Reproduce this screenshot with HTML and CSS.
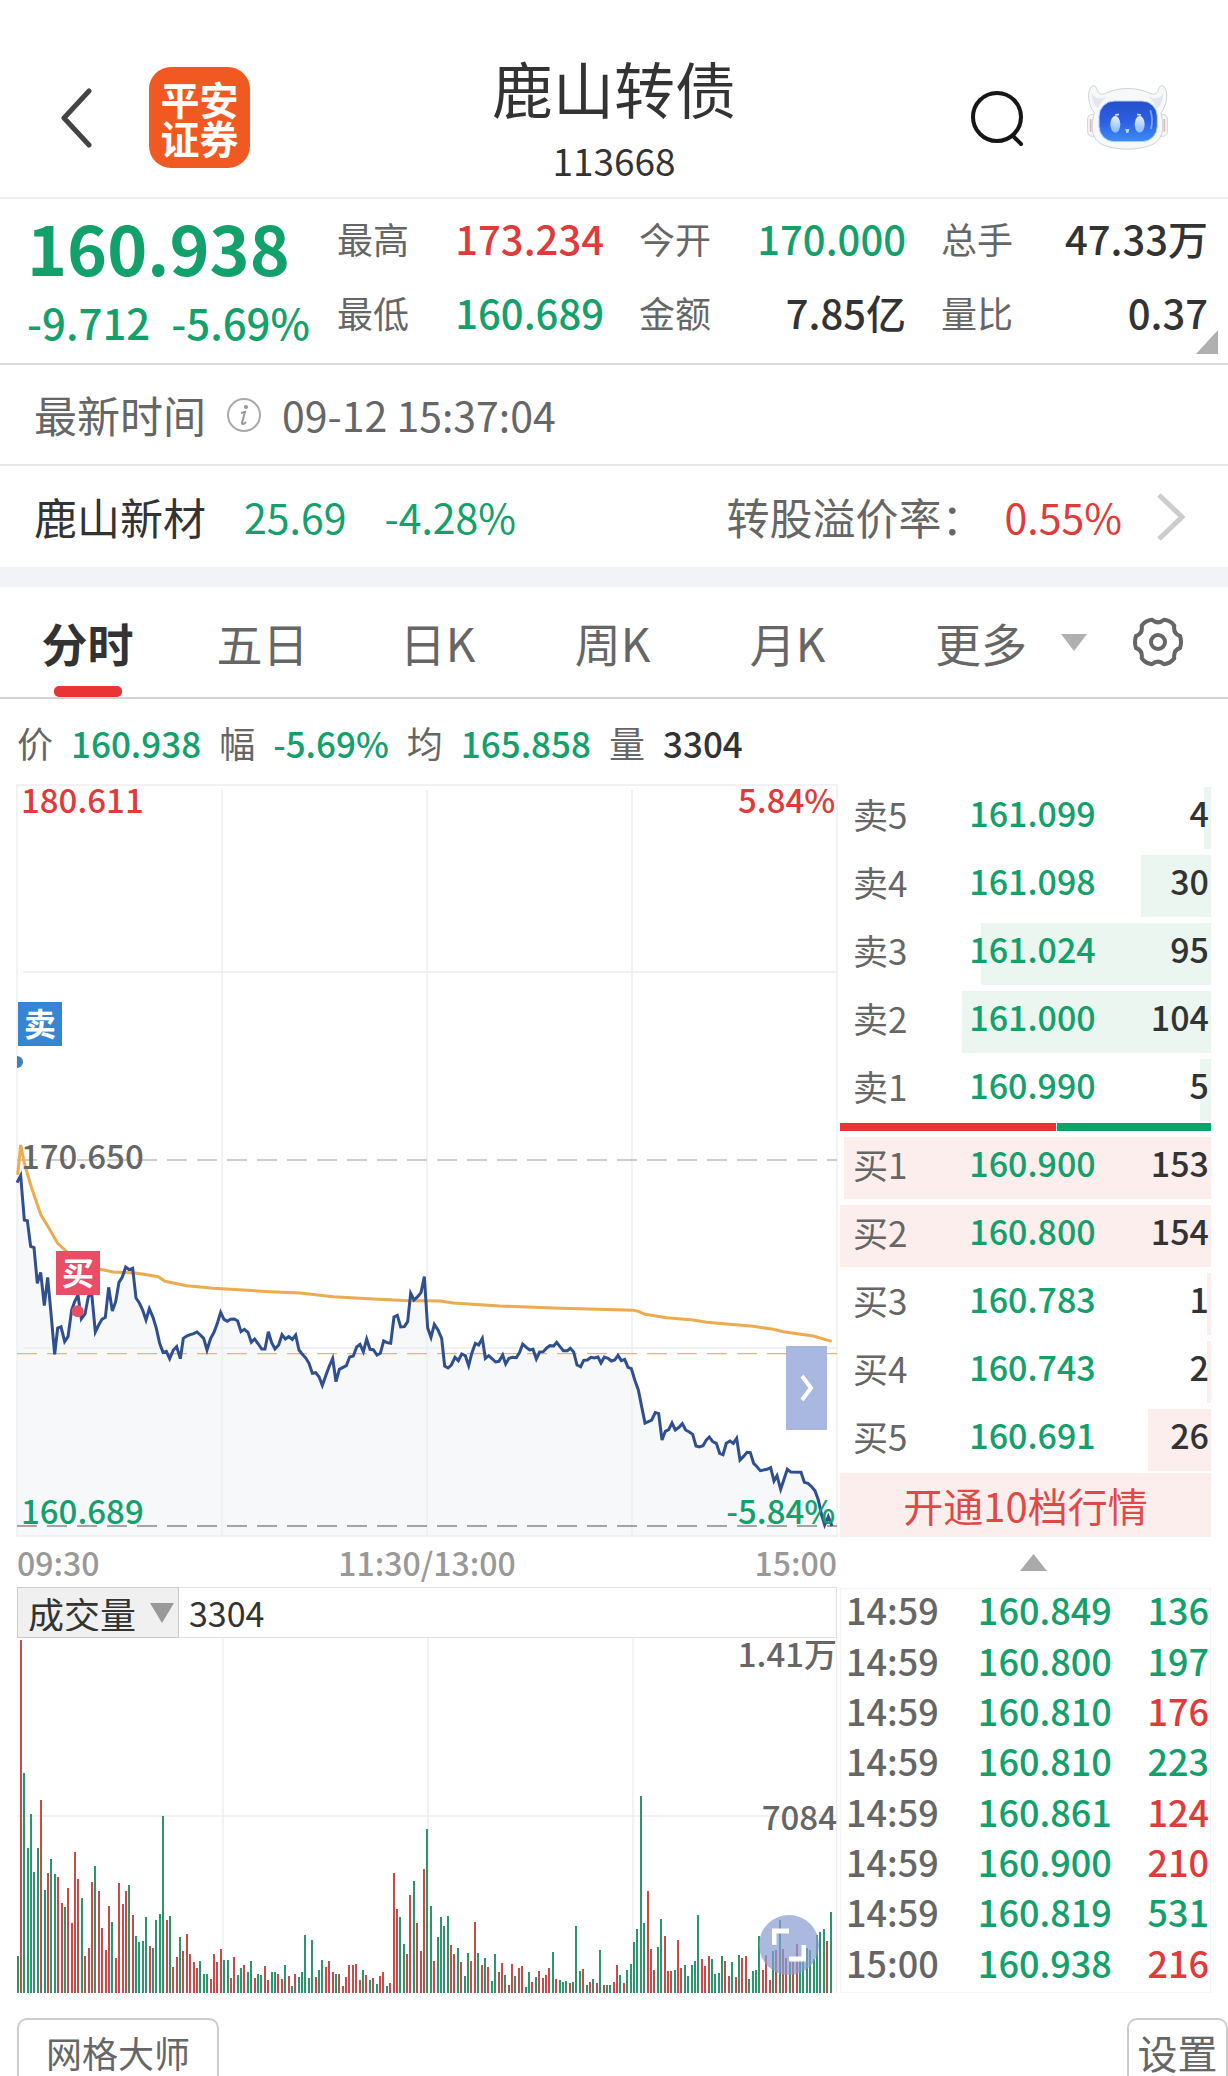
FILE: index.html
```html
<!DOCTYPE html>
<html lang="zh-CN">
<head>
<meta charset="utf-8">
<meta name="viewport" content="width=device-width">
<title>鹿山转债 113668</title>
<link rel="stylesheet" href="styles.css">
</head>
<body>
<header class="topbar">
  <div class="topbar-side">
    <button class="icon-btn" aria-label="返回">
      <svg width="32" height="60" viewBox="0 0 32 60"><path d="M29 3 4 30l25 27" fill="none" stroke="#444" stroke-width="5" stroke-linecap="round" stroke-linejoin="round"/></svg>
    </button>
    <div class="logo"><span>平安</span><span>证券</span></div>
  </div>
  <div class="title">
    <h1>鹿山转债</h1>
    <p>113668</p>
  </div>
  <div class="topbar-side topbar-right">
    <button class="icon-btn" aria-label="搜索">
      <svg width="54" height="58" viewBox="0 0 54 58"><g fill="none" stroke="#161616" stroke-width="4" stroke-linecap="round"><circle cx="27" cy="28" r="24"/><path d="M43 47l8 8"/></g></svg>
    </button>
    <button class="icon-btn" aria-label="智能助手">
      <svg width="81" height="66" viewBox="0 0 243 198">
        <defs>
          <linearGradient id="screen" x1="0" y1="0" x2="0" y2="1"><stop offset="0" stop-color="#2450c8"/><stop offset=".5" stop-color="#2c5fe4"/><stop offset="1" stop-color="#3d8cf4"/></linearGradient>
          <linearGradient id="eye" x1="0" y1="0" x2="0" y2="1"><stop offset="0" stop-color="#e4f2ff"/><stop offset="1" stop-color="#86b8ff"/></linearGradient>
        </defs>
        <g fill="#f7f8fa" stroke="#cfd1d6" stroke-width="3">
          <rect x="2" y="88" width="34" height="66" rx="14"/>
          <rect x="207" y="88" width="34" height="66" rx="14"/>
          <path d="M22 84C4 58-2 22 14 4c8-6 14 2 16 10 4 14 14 16 28 10 36-18 92-18 128 0 14 6 24 4 28-10 2-8 8-16 16-10 16 18 10 54-8 80 12 50 4 84-34 98-40 14-94 14-134 0-38-14-46-48-32-98z"/>
        </g>
        <path d="M11 102v38M232 102v38" stroke="#d9b9b6" stroke-width="5"/>
        <path d="M14 24c0 22 10 40 20 46 6-16 14-26 24-34-24 8-36 4-44-12zM229 24c0 22-10 40-20 46-6-16-14-26-24-34 24 8 36 4 44-12z" fill="#e3e6ec"/>
        <rect x="36" y="48" width="175" height="122" rx="46" fill="url(#screen)" stroke="#bcd2f8" stroke-width="3"/>
        <path d="M190 76c6 18 6 40 2 56" fill="none" stroke="#86a8f6" stroke-width="5"/>
        <ellipse cx="85" cy="118" rx="15" ry="25" fill="url(#eye)"/>
        <ellipse cx="158" cy="118" rx="15" ry="25" fill="url(#eye)"/>
        <path d="M84 90l12-2M150 88l12 2" stroke="#cfe2ff" stroke-width="5"/>
        <path d="M115 132h12l-3 12h-6z" fill="#b4d4ff"/>
      </svg>
    </button>
  </div>
</header>

<section class="quote">
  <div class="quote-main">
    <strong class="down">160.938</strong>
    <div class="quote-change down"><span>-9.712</span><span>-5.69%</span></div>
  </div>
  <dl class="quote-grid">
    <div><dt>最高</dt><dd class="up">173.234</dd></div>
    <div><dt>今开</dt><dd class="down">170.000</dd></div>
    <div><dt>总手</dt><dd>47.33万</dd></div>
    <div><dt>最低</dt><dd class="down">160.689</dd></div>
    <div><dt>金额</dt><dd>7.85亿</dd></div>
    <div><dt>量比</dt><dd>0.37</dd></div>
  </dl>
  <i class="corner"></i>
</section>

<section class="time-row">
  <span class="row-name">最新时间</span>
  <svg width="36" height="36" viewBox="0 0 36 36"><circle cx="18" cy="18" r="16" fill="none" stroke="#aaa" stroke-width="2"/><circle cx="20" cy="10" r="2" fill="#999"/><path d="M15 16l4-1-3 11c0 2 2 1 4-1" fill="none" stroke="#999" stroke-width="2"/></svg>
  <time>09-12 15:37:04</time>
</section>

<a class="stock-row" href="#stock">
  <span class="row-name stock-name">鹿山新材</span>
  <span class="down">25.69</span>
  <span class="down stock-pct">-4.28%</span>
  <span class="row-name premium">转股溢价率：</span>
  <span class="up">0.55%</span>
  <svg width="30" height="50" viewBox="0 0 30 50"><path d="M3 3l23 22L3 47" fill="none" stroke="#ccc" stroke-width="5"/></svg>
</a>

<nav class="tabs">
  <button class="tab active">分时</button>
  <button class="tab">五日</button>
  <button class="tab">日K</button>
  <button class="tab">周K</button>
  <button class="tab">月K</button>
  <div class="tabs-more">
    <button class="tab">更多<svg width="26" height="17" viewBox="0 0 26 17"><path d="M0 0h26L13 17z" fill="#b0b0b0"/></svg></button>
    <button class="icon-btn" aria-label="图表设置">
      <svg width="50" height="50" viewBox="-25 -25 50 50"><g fill="none" stroke="#666" stroke-width="4" stroke-linejoin="round"><path d="M22 6Q15 8.500 16.300 16.300Q12.500 21.500 6 22.200Q0 17-6 22.200Q-12.500 21.500-16.300 16.300Q-15 8.500-22 6Q-24 0-22-6Q-15-8.500-16.300-16.300Q-12.500-21.500-6-22.200Q0-17 6-22.200Q12.500-21.500 16.300-16.300Q15-8.500 22-6Q24 0 22 6z"/><circle r="7"/></g></svg>
    </button>
  </div>
</nav>

<dl class="stats">
  <dt>价</dt><dd class="down">160.938</dd>
  <dt>幅</dt><dd class="down">-5.69%</dd>
  <dt>均</dt><dd class="down">165.858</dd>
  <dt>量</dt><dd>3304</dd>
</dl>

<main class="market">
  <div class="charts">
    <div class="plot">
      <svg class="plot-svg" viewBox="51 -1005 2460 2253">
        <path class="area" d="M51 1248V188L62 167 73 300 82 302 92 379 102 383 112 490 122 457 133 557 143 472 153 580 164 703 173 624 183 620 194 665 204 650 215 570 234 525 244 597 255 582 275 520 286 636 306 598 316 592 326 502 337 573 357 487 377 441 398 445 408 534 438 600 448 566 469 625 489 697 509 716 530 680 541 716 550 655 591 636 611 655 621 690 642 637 662 577 682 604 713 603 723 635 744 637 754 667 785 687 795 687 805 635 825 687 846 644 887 645 897 690 927 730 937 760 967 796 998 715 1008 785 1018 748 1039 737 1060 708 1080 673 1090 695 1100 657 1110 688 1131 705 1151 663 1172 670 1182 591 1202 621 1223 605 1232 520 1263 518 1273 470 1283 624 1293 652 1303 613 1325 655 1334 738 1344 744 1365 712 1385 702 1406 737 1426 670 1447 655 1456 715 1487 726 1508 705 1517 732 1549 713 1568 672 1599 688 1609 717 1650 677 1670 667 1690 692 1711 685 1731 735 1742 740 1751 721 1854 706 1894 746 1915 810 1935 909 1955 900 1976 881 1986 960 2016 909 2047 911 2078 943 2098 981 2128 951 2169 1004 2190 963 2210 955 2220 1020 2251 998 2281 1052 2312 1043 2342 1108 2362 1048 2403 1057 2445 1112 2474 1215 2496 1218V1248z"/>
        <g class="grid">
          <path d="M51-1005H2511V1248H51z"/>
          <path d="M666-990V1248M1281-990V1248M1896-990V1248M69-444H2511M69 684H2511"/>
        </g>
        <path class="dash" stroke="#bdbdbd" d="M51 120H2511"/>
        <path class="dash" stroke="#888" d="M51 1218H2511"/>
        <path class="dash dash-last" d="M51 701H2511"/>
        <polyline class="avg" points="53,165 62,75 72,125 92,195 102,225 123,285 143,318 173,370 195,390 235,430 300,448 340,456 405,459 440,464 475,470 495,484 560,497 640,505 810,515 900,519 1000,530 1120,537 1230,542 1275,542 1320,543 1360,549 1500,558 1660,564 1900,571 1915,574 1935,583 2000,593 2080,600 2120,607 2260,619 2320,628 2350,635 2440,648 2495,664"/>
        <polyline class="price" points="51,188 62,167 73,300 82,302 92,379 102,383 112,490 122,457 133,557 143,472 153,580 164,703 173,624 183,620 194,665 204,650 215,570 224,545 234,525 244,597 255,582 265,530 275,520 286,636 296,615 306,598 316,592 326,502 337,573 347,545 357,487 367,471 377,441 387,449 398,445 408,534 418,549 428,570 438,600 448,566 459,592 469,625 479,670 489,697 499,694 509,716 520,690 530,680 541,716 550,655 560,648 571,644 581,641 591,636 601,645 611,655 621,690 632,655 642,637 652,610 662,577 672,598 682,604 692,598 703,597 713,603 723,635 733,628 744,637 754,667 764,657 775,672 785,687 795,687 805,635 815,668 825,687 836,675 846,644 856,657 866,650 877,658 887,645 897,690 907,703 918,715 927,730 937,760 947,758 957,770 967,796 978,765 988,738 998,715 1008,785 1018,748 1029,742 1039,737 1049,711 1060,708 1070,681 1080,673 1090,695 1100,657 1110,688 1120,689 1131,705 1141,700 1151,663 1161,668 1172,670 1182,591 1192,586 1202,621 1213,620 1223,605 1232,520 1242,540 1253,530 1263,518 1273,470 1283,624 1293,652 1303,613 1314,630 1325,655 1334,738 1344,744 1354,735 1365,712 1375,722 1385,702 1396,707 1406,737 1416,698 1426,670 1436,675 1447,655 1456,715 1466,707 1476,716 1487,726 1497,724 1508,705 1517,732 1527,715 1538,712 1549,713 1559,697 1568,672 1579,682 1589,690 1599,688 1609,717 1619,696 1630,695 1640,684 1650,677 1661,678 1670,667 1680,680 1690,692 1702,692 1711,685 1721,696 1731,735 1742,740 1751,721 1762,720 1773,712 1783,714 1794,711 1803,729 1813,711 1824,715 1834,723 1844,720 1854,706 1864,722 1874,718 1884,742 1894,746 1905,782 1915,810 1925,860 1935,909 1955,900 1966,878 1976,881 1986,960 1996,934 2006,929 2016,909 2026,930 2037,922 2047,911 2057,930 2068,936 2078,943 2088,978 2098,981 2109,977 2119,960 2128,951 2138,965 2149,970 2159,1000 2169,1004 2179,970 2190,963 2200,970 2210,955 2220,1020 2230,1010 2241,997 2251,998 2261,1030 2271,1040 2281,1052 2301,1048 2312,1043 2322,1083 2331,1067 2342,1108 2353,1075 2362,1048 2372,1056 2403,1057 2413,1087 2424,1090 2435,1100 2445,1112 2455,1140 2465,1185 2474,1215 2485,1190 2496,1218"/>
        <path d="M51-192a18 18 0 0 1 0 36z" fill="#3f7fc0"/>
        <rect x="54" y="-354" width="132" height="132" fill="#3585d4"/>
        <text class="mark" x="120" y="-252">卖</text>
        <circle cx="233" cy="574" r="18" fill="#e94e66"/>
        <rect x="168" y="393" width="132" height="132" fill="#e94e66"/>
        <text class="mark" x="234" y="494">买</text>
        <text class="label t-up" x="63" y="-921">180.611</text>
        <text class="label t-up end" x="2506" y="-921">5.84%</text>
        <text class="label" x="63" y="147">170.650</text>
        <text class="label t-down" x="63" y="1212">160.689</text>
        <text class="label t-down end" x="2506" y="1212">-5.84%</text>
      </svg>
      <button class="expand" aria-label="收起盘口"><svg width="14" height="28" viewBox="0 0 14 28"><path d="M2 2l9 12-9 12" fill="none" stroke="#fff" stroke-width="4"/></svg></button>
    </div>
    <div class="axis"><span>09:30</span><span>11:30/13:00</span><span>15:00</span></div>
    <div class="vol-head">
      <label class="vol-select">
        <select aria-label="指标"><option>成交量</option></select>
        <svg width="24" height="20" viewBox="0 0 24 20"><path d="M0 0h24L12 20z" fill="#999"/></svg>
      </label>
      <span>3304</span>
    </div>
    <div class="plot">
      <svg class="plot-svg" viewBox="51 204 2460 1065">
        <g class="grid"><path d="M669 204V1269M1284 204V1269M1899 204V1269M51 738H2511M2510 204V1269"/></g>
        <g id="bars"></g>
        <text class="label end" x="2511" y="291">1.41万</text>
        <text class="label end" x="2511" y="780">7084</text>
      </svg>
      <button class="fullscreen" aria-label="全屏"><svg width="34" height="34" viewBox="0 0 34 34"><path d="M2 17V3h15M32 17v14H17" fill="none" stroke="#fff" stroke-width="5"/></svg></button>
    </div>
  </div>

  <div class="side">
    <table class="book sell"><tbody>
      <tr style="--w:2%"><th>卖5</th><td class="down">161.099</td><td>4</td></tr>
      <tr style="--w:19%"><th>卖4</th><td class="down">161.098</td><td>30</td></tr>
      <tr style="--w:62%"><th>卖3</th><td class="down">161.024</td><td>95</td></tr>
      <tr style="--w:67%"><th>卖2</th><td class="down">161.000</td><td>104</td></tr>
      <tr style="--w:3%"><th>卖1</th><td class="down">160.990</td><td>5</td></tr>
    </tbody></table>
    <div class="ratio"><span></span><span></span></div>
    <table class="book buy"><tbody>
      <tr style="--w:99%"><th>买1</th><td class="down">160.900</td><td>153</td></tr>
      <tr style="--w:100%"><th>买2</th><td class="down">160.800</td><td>154</td></tr>
      <tr style="--w:1%"><th>买3</th><td class="down">160.783</td><td>1</td></tr>
      <tr style="--w:1%"><th>买4</th><td class="down">160.743</td><td>2</td></tr>
      <tr style="--w:17%"><th>买5</th><td class="down">160.691</td><td>26</td></tr>
    </tbody></table>
    <button class="cta">开通10档行情</button>
    <button class="collapse" aria-label="收起"><svg width="27" height="17" viewBox="0 0 27 17"><path d="M0 17h27L13.500 0z" fill="#aaa"/></svg></button>
    <table class="trades"><tbody>
      <tr><th>14:59</th><td class="down">160.849</td><td class="down">136</td></tr>
      <tr><th>14:59</th><td class="down">160.800</td><td class="down">197</td></tr>
      <tr><th>14:59</th><td class="down">160.810</td><td class="up">176</td></tr>
      <tr><th>14:59</th><td class="down">160.810</td><td class="down">223</td></tr>
      <tr><th>14:59</th><td class="down">160.861</td><td class="up">124</td></tr>
      <tr><th>14:59</th><td class="down">160.900</td><td class="up">210</td></tr>
      <tr><th>14:59</th><td class="down">160.819</td><td class="down">531</td></tr>
      <tr><th>15:00</th><td class="down">160.938</td><td class="up">216</td></tr>
    </tbody></table>
  </div>
</main>

<footer class="tools">
  <button class="tool tool-grid">网格大师</button>
  <button class="tool tool-set">设置</button>
</footer>
<script src="chart.js"></script>
</body>
</html>
```
FILE: styles.css
```css
:root {
  --up: #e03a3a;
  --down: #12a06b;
  --ink: #333;
  --muted: #666;
  --line: #e8e8e8;
}

* { box-sizing: border-box; }

body {
  margin: 0;
  background: #fff;
  color: var(--ink);
  font-family: "Noto Sans CJK SC", "Noto Sans", sans-serif;
  font-size: 36px;
  line-height: 1;
}

h1, p, dl, dd { margin: 0; }
button, select {
  margin: 0;
  padding: 0;
  border: 0;
  background: none;
  color: inherit;
  font: inherit;
}
svg { display: block; }
.up { color: var(--up); }
.down { color: var(--down); }
.icon-btn { display: flex; flex: none; }

/* header */
.topbar {
  display: grid;
  grid-template-columns: 1fr auto 1fr;
  align-items: center;
  height: 199px;
  padding: 38px 60px 0;
  border-bottom: 2px solid #eee;
}
.topbar-side { display: flex; align-items: center; gap: 57px; }
.topbar-right { justify-content: flex-end; gap: 63px; }
.logo {
  display: flex;
  flex-direction: column;
  align-items: center;
  justify-content: center;
  width: 101px;
  height: 101px;
  border-radius: 22px;
  background: #f05a22;
  color: #fff;
  font-size: 39px;
  font-weight: 700;
  line-height: 39px;
}
.title { padding-top: 8px; text-align: center; }
.title h1 { font-size: 61px; font-weight: 400; line-height: 76px; }
.title p { font-size: 37px; line-height: 68px; }

/* quote */
.quote {
  position: relative;
  display: grid;
  grid-template-columns: 283px 1fr;
  gap: 27px;
  height: 166px;
  padding: 0 20px 0 27px;
  border-bottom: 2px solid #ddd;
}
.quote-main strong { display: block; font-size: 68px; line-height: 96px; font-weight: 700; }
.quote-change {
  display: flex;
  justify-content: space-between;
  font-size: 42px;
  line-height: 54px;
  font-weight: 500;
}
.quote-grid {
  display: grid;
  grid-template-columns: repeat(3, 1fr);
  grid-template-rows: 74px 74px;
  column-gap: 35px;
  padding-top: 2px;
}
.quote-grid div { display: flex; justify-content: space-between; align-items: center; }
.quote-grid dt { color: var(--muted); }
.quote-grid dd { font-size: 40px; font-weight: 500; }
.corner {
  position: absolute;
  right: 10px;
  bottom: 9px;
  border: solid transparent;
  border-width: 0 0 24px 22px;
  border-bottom-color: #b0b0b0;
}

/* info rows */
.time-row, .stock-row {
  display: flex;
  align-items: center;
  height: 101px;
  padding: 0 42px 0 34px;
  font-size: 41px;
}
.row-name { font-size: 43px; }
.time-row { gap: 20px; color: var(--muted); border-bottom: 2px solid var(--line); }
.stock-row {
  height: 121px;
  border-bottom: 20px solid #f2f3f8;
  color: var(--ink);
  text-decoration: none;
}
.stock-name { margin-right: 38px; }
.stock-pct { margin-left: 38px; }
.premium { margin: 0 20px 0 auto; color: var(--muted); }
.stock-row svg { margin-left: 34px; }

/* tabs */
.tabs {
  display: grid;
  grid-template-columns: repeat(5, 175fr) 353fr;
  height: 112px;
  border-bottom: 2px solid #d4d4d4;
}
.tab {
  display: flex;
  align-items: center;
  justify-content: center;
  color: var(--muted);
  font-size: 46px;
}
.tab.active {
  position: relative;
  color: var(--ink);
  font-weight: 700;
}
.tab.active::after {
  content: "";
  position: absolute;
  left: 50%;
  bottom: 0;
  width: 68px;
  height: 11px;
  margin-left: -34px;
  border-radius: 5px;
  background: #e93434;
}
.tabs-more { display: flex; justify-content: space-between; align-items: center; padding: 0 45px 0 60px; }
.tabs-more .tab { gap: 34px; }

.stats {
  display: flex;
  align-items: center;
  gap: 18px;
  height: 86px;
  padding-left: 17px;
}
.stats dt { color: var(--muted); }
.stats dd { font-weight: 500; font-size: 35px; }

/* market */
.market {
  display: grid;
  grid-template-columns: 820fr 371fr;
  column-gap: 3px;
  padding: 0 17px;
}
.plot { position: relative; }
.plot-svg { width: 100%; height: auto; overflow: visible; }
.grid path { fill: none; stroke: #eee; stroke-width: 4; }
.area { fill: #f6f8fa; }
.price { fill: none; stroke: #2f4f8f; stroke-width: 9; }
.avg { fill: none; stroke: #ebab4e; stroke-width: 9; }
.dash { fill: none; stroke-width: 5; stroke-dasharray: 60 30; }
.dash-last { stroke: #e3b878; stroke-width: 4; }
.label { font-size: 99px; font-weight: 500; fill: #666; }
.t-up { fill: var(--up); }
.t-down { fill: var(--down); }
.end { text-anchor: end; }
.mark { font-size: 96px; font-weight: 700; fill: #fff; text-anchor: middle; }
.bar-up { fill: #c94a48; }
.bar-down { fill: #2a966c; }

.expand {
  position: absolute;
  top: 561px;
  right: 10px;
  display: flex;
  align-items: center;
  justify-content: center;
  width: 41px;
  height: 84px;
  background: #a9b8e0;
}
.fullscreen {
  position: absolute;
  right: 18px;
  bottom: 18px;
  display: flex;
  align-items: center;
  justify-content: center;
  width: 60px;
  height: 60px;
  border-radius: 50%;
  background: rgba(135, 155, 212, .7);
}
.axis {
  display: flex;
  justify-content: space-between;
  align-items: center;
  height: 51px;
  color: #999;
  font-size: 32px;
  font-weight: 500;
}
.vol-head {
  display: flex;
  align-items: center;
  gap: 10px;
  height: 51px;
  border: 1px solid #e2e2e2;
  font-size: 34px;
}
.vol-select {
  display: flex;
  align-items: center;
  justify-content: space-between;
  width: 162px;
  height: 51px;
  margin-left: -1px;
  padding: 0 4px 0 10px;
  border: 1px solid #ccc;
  background: #f0f0f0;
}
.vol-select select { appearance: none; height: 49px; font-size: 36px; }

/* order book */
.side { display: flex; flex-direction: column; padding-top: 2px; }
.book, .book tbody { display: grid; }
.book tbody { gap: 6px; }
.book tr {
  display: grid;
  grid-template-columns: 118fr 122fr 115fr;
  align-items: center;
  height: 62px;
  padding: 0 2px 10px 13px;
  background: linear-gradient(to left, var(--bar) var(--w), transparent var(--w));
}
.sell { --bar: #eaf6ef; }
.buy { --bar: #fceeed; }
.book th { padding: 0; color: var(--muted); font-size: 35px; font-weight: 400; text-align: left; }
.book td { padding: 0; font-size: 34px; font-weight: 500; text-align: right; }
.ratio {
  display: grid;
  grid-template-columns: 216fr 154fr;
  gap: 1px;
  height: 8px;
  margin: 2px 0 6px;
}
.ratio span:first-child { background: #e93434; }
.ratio span:last-child { background: #0ba368; }
.cta {
  height: 64px;
  margin-top: 2px;
  background: #fceeed;
  color: #de4a48;
  font-size: 40px;
}
.collapse { display: flex; align-items: center; justify-content: center; height: 51px; padding-left: 16px; }
.trades { display: grid; height: 405px; border: 1px solid #f4f4f4; }
.trades tbody { display: grid; grid-template-rows: repeat(8, 1fr); }
.trades tr {
  display: grid;
  grid-template-columns: 100fr 165fr 97fr;
  align-items: center;
  padding: 0 1px 10px 5px;
}
.trades th, .trades td { padding: 0; font-size: 36px; font-weight: 500; text-align: right; }
.trades th { color: var(--muted); text-align: left; }

/* bottom tools */
.tools { display: flex; justify-content: space-between; padding: 25px 0 0 17px; }
.tool {
  height: 58px;
  padding-top: 8px;
  border: 2px solid #ccc;
  border-bottom: 0;
  border-radius: 10px 10px 0 0;
  color: var(--muted);
}
.tool-grid { width: 202px; }
.tool-set { width: 101px; font-size: 40px; }
```
FILE: chart.js
```js
// One entry per minute: direction (g down, r up) and the y of the bar's top.
const minutes = `g1158 r210 g609 g834 g732 g906 g834 r690 g960 r909 g867 g912 r921 r999 g1011 r954 r1059 r846 r927 g984
r1158 r1134 r936 g888 r963 r1074 r1140 r1008 g1056 r1164 r939 r1002 r963 g945 r1035 g1098 g1116 g1113 g1041 r1128
g1134 g1050 g1032 g738 r1050 g1038 r1191 r1161 g1101 r1143 r1092 r1152 r1176 r1194 g1173 g1212 g1212 r1227 r1152 r1176
r1137 g1170 g1170 r1224 r1161 g1215 g1194 r1185 g1206 g1173 r1224 g1212 g1215 r1188 r1230 g1206 g1206 r1212 r1227 g1185
r1218 g1248 r1212 g1221 g1206 g1095 g1224 g1110 r1221 g1200 g1170 r1191 r1173 r1206 g1212 r1212 r1248 r1221 r1185 r1185
r1182 r1230 g1200 r1215 g1230 r1224 g1242 r1218 r1206 g1248 r1239 r909 r1017 g1041 g1122 r1152 r975 g933 r1059 r1143
r897 g777 g1008 r1173 g1101 g1041 g1068 g1038 r1125 r1152 g1134 r1176 g1218 g1149 r1173 r1056 g1149 r1185 g1164 r1191
g1233 g1152 r1206 r1179 g1215 r1245 r1182 g1218 r1194 r1188 g1251 g1206 r1236 g1221 r1203 r1224 r1215 r1194 g1146 r1227
g1230 g1236 g1233 r1239 g1236 g1068 g1203 r1197 g1245 r1236 g1227 r1239 g1140 r1245 g1245 g1245 r1236 r1185 g1215 r1239
g1200 g1182 g1116 g1077 g678 g1059 r963 r1137 r1200 g1131 g1047 r1098 r1203 r1203 g1200 r1110 r1194 g1185 g1218 g1185
g1173 g1035 r1167 r1188 r1158 g1167 g1212 g1209 g1158 r1173 r1218 g1176 r1221 g1155 r1164 r1158 g1227 g1203 g1200 g1098
r1200 r1155 r1230 g1143 r1140 g1050 r1137 r1164 g1170 r1175 r1122 g1170 g1160 g1134 g1140 g1167 g1095 g1086 g1077 r1113
g1026`.split(/\s+/);

const base = 1269;
const group = document.getElementById("bars");
minutes.forEach((entry, i) => {
  const top = Number(entry.slice(1));
  const bar = document.createElementNS("http://www.w3.org/2000/svg", "rect");
  bar.setAttribute("class", entry[0] === "r" ? "bar-up" : "bar-down");
  bar.setAttribute("x", 51 + 3 * Math.floor(i * 813 / (minutes.length - 1)));
  bar.setAttribute("y", top);
  bar.setAttribute("width", 6);
  bar.setAttribute("height", base - top);
  group.appendChild(bar);
});
```
